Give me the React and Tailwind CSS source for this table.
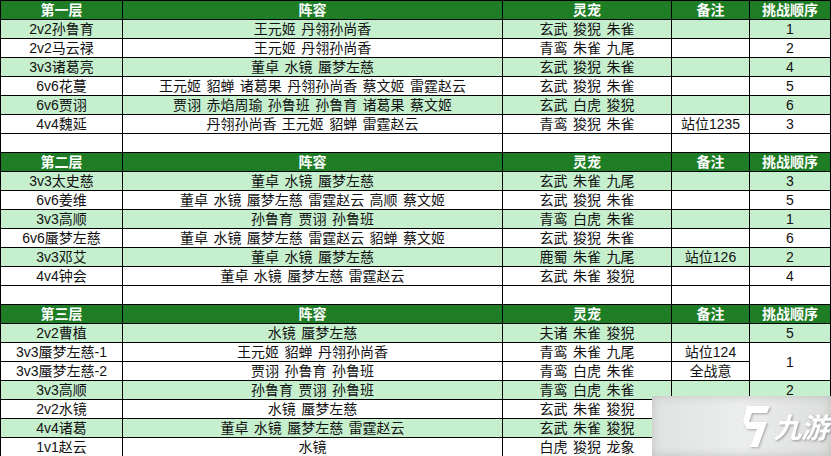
import React from "react";

const GREEN = "bg-[#c6efce]";

const sections = [
  {
    title: "第一层",
    rows: [
      ["2v2孙鲁育", "王元姬 丹翎孙尚香", "玄武 狻猊 朱雀", "", "1"],
      ["2v2马云禄", "王元姬 丹翎孙尚香", "青鸾 朱雀 九尾", "", "2"],
      ["3v3诸葛亮", "董卓 水镜 蜃梦左慈", "玄武 狻猊 朱雀", "", "4"],
      ["6v6花蔓", "王元姬 貂蝉 诸葛果 丹翎孙尚香 蔡文姬 雷霆赵云", "玄武 狻猊 朱雀", "", "5"],
      ["6v6贾诩", "贾诩 赤焰周瑜 孙鲁班 孙鲁育 诸葛果 蔡文姬", "玄武 白虎 狻猊", "", "6"],
      ["4v4魏延", "丹翎孙尚香 王元姬 貂蝉 雷霆赵云", "青鸾 狻猊 朱雀", "站位1235", "3"],
    ],
  },
  {
    title: "第二层",
    rows: [
      ["3v3太史慈", "董卓 水镜 蜃梦左慈", "玄武 朱雀 九尾", "", "3"],
      ["6v6姜维", "董卓 水镜 蜃梦左慈 雷霆赵云 高顺 蔡文姬", "玄武 狻猊 朱雀", "", "5"],
      ["3v3高顺", "孙鲁育 贾诩 孙鲁班", "青鸾 白虎 朱雀", "", "1"],
      ["6v6蜃梦左慈", "董卓 水镜 蜃梦左慈 雷霆赵云 貂蝉 蔡文姬", "玄武 狻猊 朱雀", "", "6"],
      ["3v3邓艾", "董卓 水镜 蜃梦左慈", "鹿蜀 朱雀 九尾", "站位126", "2"],
      ["4v4钟会", "董卓 水镜 蜃梦左慈 雷霆赵云", "玄武 朱雀 狻猊", "", "4"],
    ],
  },
];

const cell = "border border-black p-0 h-[19px] text-center leading-none whitespace-nowrap";

function Header({ title }) {
  const th = "border border-black p-0 h-[19px] text-center leading-none font-bold text-white bg-[#1e7d25]";
  return (
    <tr>
      <td className={th}>{title}</td>
      <td className={th}>阵容</td>
      <td className={th}>灵宠</td>
      <td className={th}>备注</td>
      <td className={th}>挑战顺序</td>
    </tr>
  );
}

function Row({ r, green }) {
  const bg = green ? GREEN : "bg-white";
  return (
    <tr className={bg}>
      {r.map((v, i) => (
        <td key={i} className={cell}>
          {v}
        </td>
      ))}
    </tr>
  );
}

function Watermark() {
  return (
    <div className="absolute left-[652px] top-[396px] w-[179px] h-[60px] bg-gradient-to-r from-[#dfe2e0] via-[#eceeed] to-[#dcdedc] shadow-[inset_0_0_10px_rgba(150,150,150,0.45)] flex items-center justify-end pr-[3px] gap-[3px]">
      <svg width="34" height="44" viewBox="0 0 34 44" className="drop-shadow-[1px_1px_1px_rgba(120,120,120,0.6)]">
        <path
          d="M11 2 L34 2 L31 9 L16 9 L13 18 L31 18 L22 43 L14 43 L21 25 L11 25 L7 18 Z"
          fill="#ffffff"
        />
      </svg>
      <span className="text-[28px] italic font-bold text-white tracking-tight drop-shadow-[1px_1px_1px_rgba(120,120,120,0.7)] [font-family:'Noto_Sans_CJK_SC',sans-serif]">
        九游
      </span>
    </div>
  );
}

export default function App() {
  return (
    <div className="relative w-[831px] h-[456px] overflow-hidden bg-white text-[14px] [word-spacing:1.5px] text-[#111] [font-family:'Liberation_Sans','Noto_Sans_CJK_SC',sans-serif]">
      <table className="border-collapse table-fixed w-[830px]">
        <colgroup>
          <col className="w-[122px]" />
          <col className="w-[380px]" />
          <col className="w-[169px]" />
          <col className="w-[78px]" />
          <col className="w-[81px]" />
        </colgroup>
        <tbody>
          {sections.map((s) => (
            <React.Fragment key={s.title}>
              <Header title={s.title} />
              {s.rows.map((r, i) => (
                <Row key={i} r={r} green={i % 2 === 0} />
              ))}
              <Row r={["", "", "", "", ""]} />
            </React.Fragment>
          ))}
          <Header title="第三层" />
          <Row r={["2v2曹植", "水镜 蜃梦左慈", "夫诸 朱雀 狻猊", "", "5"]} green />
          <tr className="bg-white">
            <td className={cell}>3v3蜃梦左慈-1</td>
            <td className={cell}>王元姬 貂蝉 丹翎孙尚香</td>
            <td className={cell}>青鸾 朱雀 九尾</td>
            <td className={cell}>站位124</td>
            <td className={cell} rowSpan={2}>1</td>
          </tr>
          <tr className="bg-white">
            <td className={cell}>3v3蜃梦左慈-2</td>
            <td className={cell}>贾诩 孙鲁育 孙鲁班</td>
            <td className={cell}>青鸾 白虎 朱雀</td>
            <td className={cell}>全战意</td>
          </tr>
          <Row r={["3v3高顺", "孙鲁育 贾诩 孙鲁班", "青鸾 白虎 朱雀", "", "2"]} green />
          <Row r={["2v2水镜", "水镜 蜃梦左慈", "玄武 朱雀 狻猊", "", ""]} />
          <Row r={["4v4诸葛", "董卓 水镜 蜃梦左慈 雷霆赵云", "玄武 朱雀 狻猊", "", ""]} green />
          <Row r={["1v1赵云", "水镜", "白虎 狻猊 龙象", "", ""]} />
        </tbody>
      </table>
      <Watermark />
    </div>
  );
}
